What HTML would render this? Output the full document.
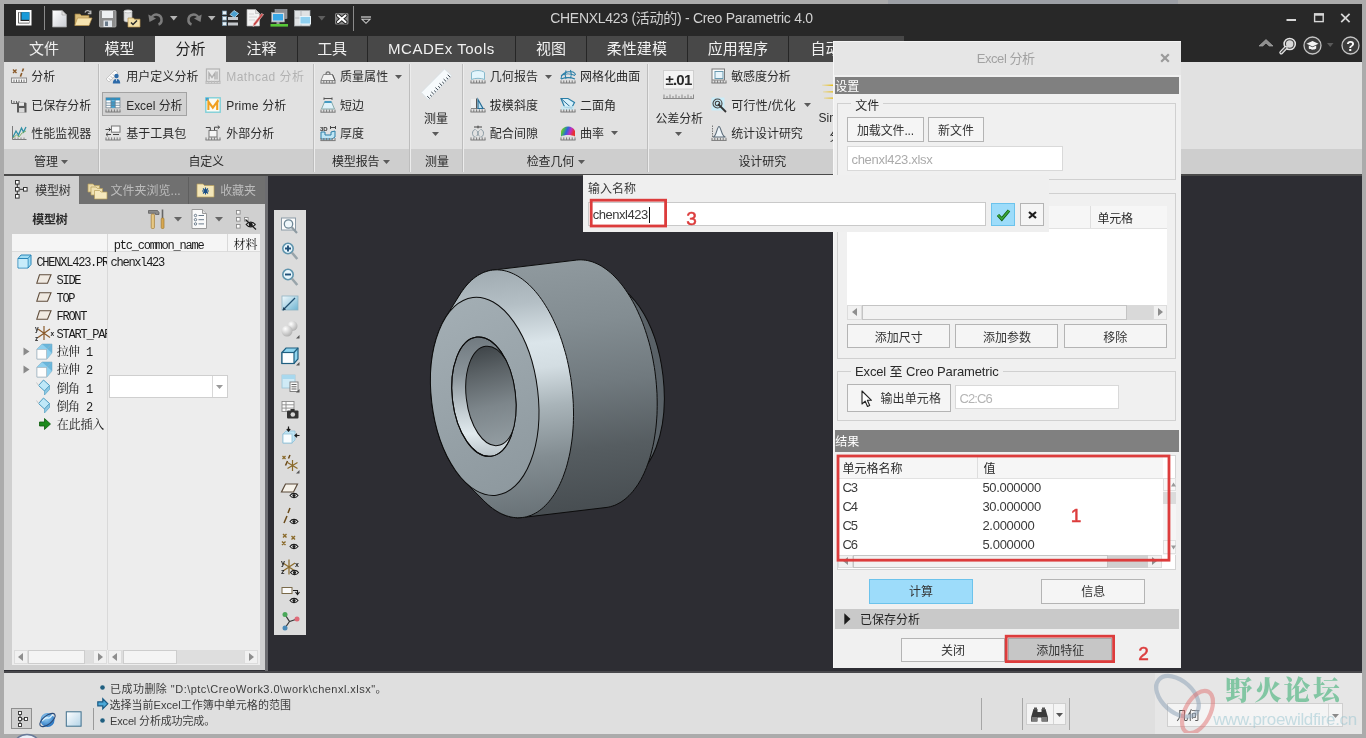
<!DOCTYPE html>
<html lang="zh-CN"><head><meta charset="utf-8"><title>Creo Parametric - Excel 分析</title>
<style>
html,body{margin:0;padding:0}
body{width:1366px;height:738px;overflow:hidden;background:#ababab;position:relative;font-family:'Liberation Sans','Noto Sans CJK SC',sans-serif;font-size:12px}
.a{position:absolute;box-sizing:content-box}
.t{position:absolute;white-space:pre;margin:0;padding:0}
svg{overflow:visible}
svg text{font-family:'Liberation Sans','Noto Sans CJK SC',sans-serif}
</style></head><body>
<div id="app" style="position:absolute;left:0;top:0;width:1366px;height:738px;overflow:hidden;will-change:transform">
<div class="a" style="left:888px;top:0px;width:290px;height:4px;background:#9da0a6;"></div>
<div class="a" style="left:4px;top:4px;width:1358px;height:729px;background:#2d2d33;"></div>
<div class="a" style="left:4px;top:4px;width:1358px;height:58px;background:#282828;"></div>
<span class="t" id="title" style="left:550.20px;top:8.00px;font-size:14px;line-height:20px;color:#d2d2d2;letter-spacing:-0.283px;">CHENXL423 (活动的) - Creo Parametric 4.0</span>
<svg class="a" style="left:1280px;top:8px;" width="80" height="20" viewBox="0 0 80 20"><rect x="6.5" y="11" width="9.5" height="2" fill="#d6d6d6"/>
<rect x="34.6" y="6" width="8.6" height="7.6" fill="none" stroke="#d6d6d6" stroke-width="1.4"/><rect x="34" y="5.3" width="10" height="2.4" fill="#d6d6d6"/>
<path d="M61.2 5.8 L69.6 14.2 M69.6 5.8 L61.2 14.2" stroke="#d6d6d6" stroke-width="1.7"/></svg>
<div class="a" style="left:84px;top:36px;width:820px;height:26px;background:#484848;"></div>
<div class="a" style="left:4px;top:36px;width:80px;height:26px;background:#606060;"></div>
<span class="t" id="tab0" style="left:29.10px;top:37.50px;font-size:15px;line-height:21px;color:#f0f0f0;letter-spacing:-0.100px;">文件</span>
<div class="a" style="left:83.5px;top:36px;width:1px;height:26px;background:#262626;"></div>
<span class="t" id="tab1" style="left:104.60px;top:37.50px;font-size:15px;line-height:21px;color:#f0f0f0;letter-spacing:-0.100px;">模型</span>
<div class="a" style="left:155px;top:36px;width:71px;height:26px;background:#e1e1e1;"></div>
<span class="t" id="tab2" style="left:175.60px;top:37.50px;font-size:15px;line-height:21px;color:#1e1e1e;letter-spacing:-0.100px;">分析</span>
<span class="t" id="tab3" style="left:246.60px;top:37.50px;font-size:15px;line-height:21px;color:#f0f0f0;letter-spacing:-0.100px;">注释</span>
<div class="a" style="left:296.5px;top:36px;width:1px;height:26px;background:#262626;"></div>
<span class="t" id="tab4" style="left:317.20px;top:37.50px;font-size:15px;line-height:21px;color:#f0f0f0;letter-spacing:-0.100px;">工具</span>
<div class="a" style="left:366.7px;top:36px;width:1px;height:26px;background:#262626;"></div>
<span class="t" id="tab5" style="left:388.05px;top:37.50px;font-size:15px;line-height:21px;color:#f0f0f0;letter-spacing:0.509px;">MCADEx Tools</span>
<div class="a" style="left:515.1px;top:36px;width:1px;height:26px;background:#262626;"></div>
<span class="t" id="tab6" style="left:536.05px;top:37.50px;font-size:15px;line-height:21px;color:#f0f0f0;letter-spacing:-0.100px;">视图</span>
<div class="a" style="left:585.8px;top:36px;width:1px;height:26px;background:#262626;"></div>
<span class="t" id="tab7" style="left:606.75px;top:37.50px;font-size:15px;line-height:21px;color:#f0f0f0;letter-spacing:0.046px;">柔性建模</span>
<div class="a" style="left:686.9px;top:36px;width:1px;height:26px;background:#262626;"></div>
<span class="t" id="tab8" style="left:707.80px;top:37.50px;font-size:15px;line-height:21px;color:#f0f0f0;letter-spacing:0.046px;">应用程序</span>
<div class="a" style="left:787.9px;top:36px;width:1px;height:26px;background:#262626;"></div>
<span class="t" id="tab9" style="left:810.40px;top:37.50px;font-size:15px;line-height:21px;color:#f0f0f0;letter-spacing:-0.005px;">自动化</span>
<div class="a" style="left:4px;top:62px;width:1358px;height:87.5px;background:#e1e1e1;"></div>
<div class="a" style="left:4px;top:149.3px;width:1358px;height:24.7px;background:#cecece;"></div>
<div class="a" style="left:4px;top:174px;width:1358px;height:1.6px;background:#4a4a4a;"></div>
<div class="a" style="left:98.0px;top:64px;width:1px;height:108px;background:#bdbdbd;"></div>
<div class="a" style="left:99.0px;top:64px;width:1px;height:108px;background:#ececec;"></div>
<div class="a" style="left:312.5px;top:64px;width:1px;height:108px;background:#bdbdbd;"></div>
<div class="a" style="left:313.5px;top:64px;width:1px;height:108px;background:#ececec;"></div>
<div class="a" style="left:409.1px;top:64px;width:1px;height:108px;background:#bdbdbd;"></div>
<div class="a" style="left:410.1px;top:64px;width:1px;height:108px;background:#ececec;"></div>
<div class="a" style="left:462.1px;top:64px;width:1px;height:108px;background:#bdbdbd;"></div>
<div class="a" style="left:463.1px;top:64px;width:1px;height:108px;background:#ececec;"></div>
<div class="a" style="left:647.0px;top:64px;width:1px;height:108px;background:#bdbdbd;"></div>
<div class="a" style="left:648.0px;top:64px;width:1px;height:108px;background:#ececec;"></div>
<svg class="a" style="left:11.3px;top:68.4px;" width="16" height="16" viewBox="0 0 16 16"><path d="M2 1.5l3.5 3.5M5.5 1.5L2 5" stroke="#8a5a2a" stroke-width="1.4"/><path d="M12.5 0.5l-1.2 3M10.8 5l-1.4 3.6" stroke="#8a5a2a" stroke-width="1.6"/><rect x="0.5" y="10" width="15" height="4.5" fill="#f4f4f4" stroke="#8a8a8a"/><path d="M3 14v-2.4M5.5 14v-2.4M8 14v-2.4M10.5 14v-2.4M13 14v-2.4" stroke="#777"/></svg>
<span class="t" id="t12" style="left:31.30px;top:68.40px;font-size:12px;line-height:18px;color:#2b2b2b;letter-spacing:-0.008px;">分析</span>
<svg class="a" style="left:11.3px;top:96.5px;" width="16" height="16" viewBox="0 0 16 16"><path d="M0.5 3v3.5H9 M3 6.5v-2.5M5.5 6.5v-2.5M8 6.5v-2.5" stroke="#666" fill="none"/><path d="M6 5.5h8.5l1 1v9H6z" fill="#5a5a5a"/><rect x="8" y="5.5" width="5" height="3.4" fill="#e8e8e8"/><rect x="8" y="11" width="5.5" height="4.5" fill="#d8d8d8"/></svg>
<span class="t" id="t13" style="left:31.30px;top:96.50px;font-size:12px;line-height:18px;color:#2b2b2b;letter-spacing:-0.003px;">已保存分析</span>
<svg class="a" style="left:11.3px;top:124.6px;" width="16" height="16" viewBox="0 0 16 16"><path d="M1.5 1v13.5H15.5" stroke="#7a7a7a" fill="none"/><path d="M2 12l3-6 2.5 4 3-7 2 4 2.5-5" stroke="#2f8fa5" stroke-width="1.3" fill="none"/><path d="M2 13l3.5-3 2.5 2 3-4 4-2" stroke="#6aa84f" stroke-width="1" fill="none" opacity=".8"/><path d="M4 14.5v-2M7 14.5v-2M10 14.5v-2M13 14.5v-2" stroke="#888"/></svg>
<span class="t" id="t14" style="left:31.30px;top:124.60px;font-size:12px;line-height:18px;color:#2b2b2b;letter-spacing:-0.003px;">性能监视器</span>
<span class="t" id="t15" style="left:34.00px;top:153.00px;font-size:12px;line-height:18px;color:#2b2b2b;letter-spacing:-0.008px;">管理</span>
<svg class="a" style="left:60.8px;top:159.5px;" width="7" height="4" viewBox="0 0 7 4"><path d="M0 0h7l-3.5 4z" fill="#5a5a5a"/></svg>
<div class="a" style="left:102.4px;top:92.4px;width:82.4px;height:21.8px;background:#d2d2d2;border:1px solid #a3a3a3;"></div>
<svg class="a" style="left:105.3px;top:68.4px;" width="16" height="16" viewBox="0 0 16 16"><path d="M1 11L10 2l3 3-9 9z" fill="#fafafa" stroke="#bdbdbd" stroke-width=".8"/><path d="M4 10.5l1.2 1.2M6 8.5l1.2 1.2M8 6.5l1.2 1.2" stroke="#999"/><circle cx="11.5" cy="8" r="2.2" fill="#2c6aa8"/><path d="M7.8 15.5c0-3.4 1.6-4.6 3.7-4.6s3.7 1.2 3.7 4.6z" fill="#2c6aa8"/><path d="M10.8 11.2l.7 2.2.7-2.2z" fill="#fff"/></svg>
<span class="t" id="t16" style="left:126.20px;top:68.40px;font-size:12px;line-height:18px;color:#2b2b2b;letter-spacing:0.048px;">用户定义分析</span>
<svg class="a" style="left:105.3px;top:96.5px;" width="16" height="16" viewBox="0 0 16 16"><rect x="1" y="0.8" width="14" height="10" fill="#fff" stroke="#7a8a96" stroke-width=".8"/><rect x="1" y="0.8" width="14" height="2.6" fill="#2f8fc0"/><rect x="6" y="3.4" width="4.2" height="7.4" fill="#3c9fd0"/><path d="M1 5.9h14M1 8.3h14M6 1v10M10.2 1v10" stroke="#5f7f94" stroke-width=".8"/><path d="M0.5 15H15.5 M1.0 15v-2.6 M3.8 15v-2.6 M6.6 15v-2.6 M9.4 15v-2.6 M12.2 15v-2.6 M15.0 15v-2.6" stroke="#7a7a7a" stroke-width="1" fill="none"/></svg>
<span class="t" id="t17" style="left:126.20px;top:96.50px;font-size:12px;line-height:18px;color:#2b2b2b;letter-spacing:-0.036px;">Excel 分析</span>
<svg class="a" style="left:105.3px;top:124.6px;" width="16" height="16" viewBox="0 0 16 16"><rect x="6.5" y="1" width="8.5" height="6.2" fill="#f6f6f6" stroke="#777"/><path d="M0.5 4.5h5M3.8 2.8l1.8 1.7-1.8 1.7M6 9.5H1M2.8 7.8L1 9.5l1.8 1.7" stroke="#444" fill="none"/><path d="M8 9.5h6" stroke="#444"/><path d="M0.5 15H15.5 M1.0 15v-2.6 M3.8 15v-2.6 M6.6 15v-2.6 M9.4 15v-2.6 M12.2 15v-2.6 M15.0 15v-2.6" stroke="#7a7a7a" stroke-width="1" fill="none"/></svg>
<span class="t" id="t18" style="left:126.20px;top:124.60px;font-size:12px;line-height:18px;color:#2b2b2b;letter-spacing:-0.003px;">基于工具包</span>
<svg class="a" style="left:205.4px;top:68.4px;" width="16" height="16" viewBox="0 0 16 16"><rect x="1.5" y="1" width="13" height="12.5" fill="#e9e9e9" stroke="#b5b5b5" stroke-width="1.3"/><path d="M4 11.5V5l3 4.5L10 5v6.5M12 11.5v-8" stroke="#b0b0b0" stroke-width="1.4" fill="none"/><path d="M0.5 15.4H15.5 M1.0 15.4v-2.6 M3.8 15.4v-2.6 M6.6 15.4v-2.6 M9.4 15.4v-2.6 M12.2 15.4v-2.6 M15.0 15.4v-2.6" stroke="#bcbcbc" stroke-width="1" fill="none"/></svg>
<span class="t" id="t19" style="left:226.20px;top:68.40px;font-size:12px;line-height:18px;color:#b2b2b2;letter-spacing:0.503px;">Mathcad 分析</span>
<svg class="a" style="left:205.4px;top:96.5px;" width="16" height="16" viewBox="0 0 16 16"><rect x="0.8" y="0.8" width="14.4" height="14.4" fill="#fbfbf4" stroke="#7fcfd8" stroke-width="1.4"/><rect x="0.8" y="0.8" width="3" height="3" fill="#3aa0d8"/><path d="M3.4 13V4.6l4.4 6 4.4-6V13" stroke="#f0a020" stroke-width="2.1" fill="none" stroke-linejoin="miter"/><path d="M13.2 3.2v2" stroke="#f0a020" stroke-width="1.2"/></svg>
<span class="t" id="t20" style="left:226.20px;top:96.50px;font-size:12px;line-height:18px;color:#2b2b2b;letter-spacing:0.216px;">Prime 分析</span>
<svg class="a" style="left:205.4px;top:124.6px;" width="16" height="16" viewBox="0 0 16 16"><rect x="4" y="5.5" width="8" height="6.5" fill="#f6f6f6" stroke="#777"/><path d="M0.8 2.5h4.5v3M9.5 5V2.2h5M12.8 0.6l1.8 1.6-1.8 1.6" stroke="#444" fill="none"/><path d="M0.5 15H15.5 M1.0 15v-2.6 M3.8 15v-2.6 M6.6 15v-2.6 M9.4 15v-2.6 M12.2 15v-2.6 M15.0 15v-2.6" stroke="#7a7a7a" stroke-width="1" fill="none"/></svg>
<span class="t" id="t21" style="left:226.20px;top:124.60px;font-size:12px;line-height:18px;color:#2b2b2b;letter-spacing:-0.004px;">外部分析</span>
<span class="t" id="t22" style="left:188.45px;top:153.00px;font-size:12px;line-height:18px;color:#2b2b2b;letter-spacing:-0.167px;">自定义</span>
<svg class="a" style="left:320px;top:68.4px;" width="16" height="16" viewBox="0 0 16 16"><path d="M3.5 6.5h9l2.5 6h-14z" fill="#f2f2f2" stroke="#8a8a8a"/><path d="M6 6.2c0-3 4-3 4 0" stroke="#777" fill="none" stroke-width="1.3"/><path d="M12.5 6.5l2.5 6" stroke="#555"/><path d="M0.5 15.2H15.5 M1.0 15.2v-2.6 M3.8 15.2v-2.6 M6.6 15.2v-2.6 M9.4 15.2v-2.6 M12.2 15.2v-2.6 M15.0 15.2v-2.6" stroke="#7a7a7a" stroke-width="1" fill="none"/></svg>
<span class="t" id="t23" style="left:340.00px;top:68.40px;font-size:12px;line-height:18px;color:#2b2b2b;letter-spacing:0.048px;">质量属性</span>
<svg class="a" style="left:320px;top:96.5px;" width="16" height="16" viewBox="0 0 16 16"><path d="M4 1.5h8M4 0.5v2.4M12 0.5v2.4" stroke="#555" fill="none"/><path d="M4.5 5h7l3 7h-13z" fill="#dff2fa" stroke="#8aa"/><path d="M4.5 5h7" stroke="#2a8fc0" stroke-width="1.6"/><path d="M0.5 15.2H15.5 M1.0 15.2v-2.6 M3.8 15.2v-2.6 M6.6 15.2v-2.6 M9.4 15.2v-2.6 M12.2 15.2v-2.6 M15.0 15.2v-2.6" stroke="#7a7a7a" stroke-width="1" fill="none"/></svg>
<span class="t" id="t24" style="left:340.00px;top:96.50px;font-size:12px;line-height:18px;color:#2b2b2b;letter-spacing:-0.008px;">短边</span>
<svg class="a" style="left:320px;top:124.6px;" width="16" height="16" viewBox="0 0 16 16"><text x="0" y="5.5" font-size="6" font-weight="bold" fill="#333">3D</text><path d="M10.5 2.5h5M10.5 1v3M15.5 1v3" stroke="#444" fill="none"/><path d="M1 7h4v3h6V7l4-1v6l-3 2H1z" fill="#bfe6f5" stroke="#2a7fa8"/><path d="M0.5 15.6H15.5 M1.0 15.6v-2.6 M3.8 15.6v-2.6 M6.6 15.6v-2.6 M9.4 15.6v-2.6 M12.2 15.6v-2.6 M15.0 15.6v-2.6" stroke="#7a7a7a" stroke-width="1" fill="none"/></svg>
<span class="t" id="t25" style="left:340.00px;top:124.60px;font-size:12px;line-height:18px;color:#2b2b2b;letter-spacing:-0.008px;">厚度</span>
<svg class="a" style="left:394.7px;top:74.5px;" width="7" height="4" viewBox="0 0 7 4"><path d="M0 0h7l-3.5 4z" fill="#5a5a5a"/></svg>
<span class="t" id="t26" style="left:332.00px;top:153.00px;font-size:12px;line-height:18px;color:#2b2b2b;letter-spacing:-0.129px;">模型报告</span>
<svg class="a" style="left:382.8px;top:159.5px;" width="7" height="4" viewBox="0 0 7 4"><path d="M0 0h7l-3.5 4z" fill="#5a5a5a"/></svg>
<svg class="a" style="left:0;top:0" width="1366" height="738" viewBox="0 0 1366 738"><path d="M444.5 69L451.6 75.6L428.3 100L421.2 92.4Z" fill="#f6fafc" stroke="#d4dde2" stroke-width=".8"/><path d="M450.2 77.1l-2.5 -2.3M448.1 79.2l-1.8 -1.6M446.1 81.4l-2.5 -2.3M444.0 83.5l-1.8 -1.6M442.0 85.7l-2.5 -2.3M440.0 87.8l-1.8 -1.6M437.9 89.9l-2.5 -2.3M435.9 92.1l-1.8 -1.6M433.8 94.2l-2.5 -2.3M431.8 96.4l-1.8 -1.6M429.7 98.5l-2.5 -2.3" stroke="#3c4650" stroke-width="1" fill="none"/></svg>
<span class="t" id="t27" style="left:423.90px;top:109.60px;font-size:12px;line-height:18px;color:#2b2b2b;letter-spacing:-0.008px;">测量</span>
<svg class="a" style="left:432.1px;top:132.1px;" width="7" height="4" viewBox="0 0 7 4"><path d="M0 0h7l-3.5 4z" fill="#5a5a5a"/></svg>
<span class="t" id="t28" style="left:425.00px;top:153.00px;font-size:12px;line-height:18px;color:#2b2b2b;letter-spacing:-0.008px;">测量</span>
<svg class="a" style="left:469.5px;top:68.4px;" width="16" height="16" viewBox="0 0 16 16"><path d="M1.5 11.5V4.5c3-2.6 10-2.6 13 0v7c-3-1.6-10-1.6-13 0z" fill="#e3f5fc" stroke="#86b9cc"/><path d="M0.5 15H15.5 M1.0 15v-2.6 M3.8 15v-2.6 M6.6 15v-2.6 M9.4 15v-2.6 M12.2 15v-2.6 M15.0 15v-2.6" stroke="#7a7a7a" stroke-width="1" fill="none"/></svg>
<span class="t" id="t29" style="left:489.70px;top:68.40px;font-size:12px;line-height:18px;color:#2b2b2b;letter-spacing:0.096px;">几何报告</span>
<svg class="a" style="left:469.5px;top:96.5px;" width="16" height="16" viewBox="0 0 16 16"><path d="M1 11.5h14" stroke="#888"/><path d="M6.5 1.5v10" stroke="#555"/><path d="M8 2.5l5 9h-5z" fill="#bfe1f0" stroke="#2a6f98" stroke-width="1.2"/><rect x="1" y="2" width="5" height="9" fill="#f4f4f4" opacity=".7"/><path d="M0.5 15H15.5 M1.0 15v-2.6 M3.8 15v-2.6 M6.6 15v-2.6 M9.4 15v-2.6 M12.2 15v-2.6 M15.0 15v-2.6" stroke="#7a7a7a" stroke-width="1" fill="none"/></svg>
<span class="t" id="t30" style="left:489.70px;top:96.50px;font-size:12px;line-height:18px;color:#2b2b2b;letter-spacing:0.096px;">拔模斜度</span>
<svg class="a" style="left:469.5px;top:124.6px;" width="16" height="16" viewBox="0 0 16 16"><path d="M4 2h8M8 0.6v2.8" stroke="#444" fill="none"/><path d="M5.5 4.5c-4 0-4 7.5 0 7.5M10.5 4.5c4 0 4 7.5 0 7.5M6.5 5.5c2 1.2 2 4.6 0 5.6M9.5 5.5c-2 1.2-2 4.6 0 5.6" stroke="#8a9aa2" fill="none"/><path d="M0.5 15H15.5 M1.0 15v-2.6 M3.8 15v-2.6 M6.6 15v-2.6 M9.4 15v-2.6 M12.2 15v-2.6 M15.0 15v-2.6" stroke="#7a7a7a" stroke-width="1" fill="none"/></svg>
<span class="t" id="t31" style="left:489.70px;top:124.60px;font-size:12px;line-height:18px;color:#2b2b2b;letter-spacing:0.096px;">配合间隙</span>
<svg class="a" style="left:544.5px;top:74.5px;" width="7" height="4" viewBox="0 0 7 4"><path d="M0 0h7l-3.5 4z" fill="#5a5a5a"/></svg>
<svg class="a" style="left:560px;top:68.4px;" width="16" height="16" viewBox="0 0 16 16"><path d="M1 11c0-8 14-10 14.500-4M1 7.5c4-2 10-2 14 0M1 11c4-1.600 10-1.600 14 0M6 2.5c-1 3-1 6 0 8.500M10.5 2c1 3 1 6 0 8.500" stroke="#2a7fa8" fill="none" stroke-width="1.100"/><path d="M0.5 15H15.5 M1.0 15v-2.6 M3.8 15v-2.6 M6.6 15v-2.6 M9.4 15v-2.6 M12.2 15v-2.6 M15.0 15v-2.6" stroke="#7a7a7a" stroke-width="1" fill="none"/></svg>
<span class="t" id="t32" style="left:580.00px;top:68.40px;font-size:12px;line-height:18px;color:#2b2b2b;letter-spacing:0.039px;">网格化曲面</span>
<svg class="a" style="left:560px;top:96.5px;" width="16" height="16" viewBox="0 0 16 16"><path d="M1 1.500h7l6.500 4-3 5.500-7-1z" fill="#d8f0fa" stroke="#2a7fa8" stroke-width="1.200"/><path d="M1 1.500l10.500 9.500" stroke="#2a6f98"/><rect x="1" y="9" width="13" height="4" fill="#c8e8f4" opacity=".8"/><path d="M0.5 15H15.5 M1.0 15v-2.6 M3.8 15v-2.6 M6.6 15v-2.6 M9.4 15v-2.6 M12.2 15v-2.6 M15.0 15v-2.6" stroke="#7a7a7a" stroke-width="1" fill="none"/></svg>
<span class="t" id="t33" style="left:580.00px;top:96.50px;font-size:12px;line-height:18px;color:#2b2b2b;letter-spacing:-0.005px;">二面角</span>
<svg class="a" style="left:560px;top:124.6px;" width="16" height="16" viewBox="0 0 16 16"><defs><linearGradient id="gcv" x1="0" x2="1" y1="0" y2="0.3"><stop offset="0" stop-color="#e8c020"/><stop offset=".25" stop-color="#48c048"/><stop offset=".5" stop-color="#3060e0"/><stop offset=".75" stop-color="#c030c0"/><stop offset="1" stop-color="#e83030"/></linearGradient></defs><path d="M1 11.500V6c2-6 12-6 14 0v5.500c-3-2-11-2-14 0z" fill="url(#gcv)"/><path d="M0.5 15H15.5 M1.0 15v-2.6 M3.8 15v-2.6 M6.6 15v-2.6 M9.4 15v-2.6 M12.2 15v-2.6 M15.0 15v-2.6" stroke="#7a7a7a" stroke-width="1" fill="none"/></svg>
<span class="t" id="t34" style="left:580.00px;top:124.60px;font-size:12px;line-height:18px;color:#2b2b2b;letter-spacing:-0.008px;">曲率</span>
<svg class="a" style="left:611.1px;top:130.5px;" width="7" height="4" viewBox="0 0 7 4"><path d="M0 0h7l-3.5 4z" fill="#5a5a5a"/></svg>
<span class="t" id="t35" style="left:526.70px;top:153.00px;font-size:12px;line-height:18px;color:#2b2b2b;letter-spacing:-0.129px;">检查几何</span>
<svg class="a" style="left:577.5px;top:159.5px;" width="7" height="4" viewBox="0 0 7 4"><path d="M0 0h7l-3.5 4z" fill="#5a5a5a"/></svg>
<svg class="a" style="left:662px;top:69px;" width="34" height="32" viewBox="0 0 34 32"><rect x="1.500" y="1.500" width="30" height="18.500" fill="#f4f4f4" stroke="#cfcfcf"/>
<text x="16.500" y="16" text-anchor="middle" font-size="15" font-weight="bold" fill="#2a2a2a" letter-spacing="-0.800">±.01</text>
<path d="M1 29.500h31M2 29.500v-4M5 29.500v-2.500M8 29.500v-4M11 29.500v-2.500M14 29.500v-4M17 29.500v-2.500M20 29.500v-4M23 29.500v-2.500M26 29.500v-4M29 29.500v-2.500M31.500 29.500v-4" stroke="#8a8a8a" fill="none"/></svg>
<span class="t" id="t36" style="left:655.50px;top:109.70px;font-size:12px;line-height:18px;color:#2b2b2b;letter-spacing:-0.154px;">公差分析</span>
<svg class="a" style="left:675.2px;top:131.7px;" width="7" height="4" viewBox="0 0 7 4"><path d="M0 0h7l-3.5 4z" fill="#5a5a5a"/></svg>
<svg class="a" style="left:710.6px;top:68.4px;" width="16" height="16" viewBox="0 0 16 16"><rect x="1" y="1" width="12.500" height="11" fill="#fafafa" stroke="#7a7a7a"/><rect x="4" y="3.500" width="8" height="7" fill="#e8f4fa" stroke="#6a9ab0"/><path d="M0.5 15H15.5 M1.0 15v-2.6 M3.8 15v-2.6 M6.6 15v-2.6 M9.4 15v-2.6 M12.2 15v-2.6 M15.0 15v-2.6" stroke="#7a7a7a" stroke-width="1" fill="none"/></svg>
<span class="t" id="t37" style="left:731.20px;top:68.40px;font-size:12px;line-height:18px;color:#2b2b2b;letter-spacing:-0.082px;">敏感度分析</span>
<svg class="a" style="left:710.6px;top:97.0px;" width="16" height="16" viewBox="0 0 16 16"><rect x="0.500" y="0.500" width="13" height="13" fill="#c9ecf8"/><circle cx="6.500" cy="6.500" r="4.500" fill="none" stroke="#444" stroke-width="1.100"/><circle cx="6.500" cy="6.500" r="2.200" fill="none" stroke="#444" stroke-width="1.100"/><path d="M7 7l8 8" stroke="#333" stroke-width="1.800"/></svg>
<span class="t" id="t38" style="left:731.20px;top:97.30px;font-size:12px;line-height:18px;color:#2b2b2b;letter-spacing:0.244px;">可行性/优化</span>
<svg class="a" style="left:710.6px;top:124.6px;" width="16" height="16" viewBox="0 0 16 16"><path d="M1.500 0.500v12.500" stroke="#777" stroke-dasharray="1.500 1"/><path d="M2 12c3.500 0 4-10.500 6-10.500s2.500 10.500 6.500 10.500z" fill="#eef4f8" stroke="#5a6a78" stroke-width="1.100"/><path d="M0.5 15.4H15.5 M1.0 15.4v-2.6 M3.8 15.4v-2.6 M6.6 15.4v-2.6 M9.4 15.4v-2.6 M12.2 15.4v-2.6 M15.0 15.4v-2.6" stroke="#7a7a7a" stroke-width="1" fill="none"/></svg>
<span class="t" id="t39" style="left:731.20px;top:124.60px;font-size:12px;line-height:18px;color:#2b2b2b;letter-spacing:-0.068px;">统计设计研究</span>
<svg class="a" style="left:803.7px;top:102.8px;" width="7" height="4" viewBox="0 0 7 4"><path d="M0 0h7l-3.5 4z" fill="#5a5a5a"/></svg>
<span class="t" id="t40" style="left:738.40px;top:153.30px;font-size:12px;line-height:18px;color:#2b2b2b;letter-spacing:-0.052px;">设计研究</span>
<span class="t" id="t41" style="left:818.60px;top:108.70px;font-size:12px;line-height:18px;color:#2b2b2b;">Simulate</span>
<span class="t" id="t42" style="left:829.50px;top:127.50px;font-size:12px;line-height:18px;color:#2b2b2b;">分析</span>
<svg class="a" style="left:822px;top:82px;" width="12" height="18" viewBox="0 0 12 18"><defs><linearGradient id="gsim" x1="0" x2="1" y1="0" y2="0"><stop offset="0" stop-color="#ecc21c" stop-opacity=".15"/><stop offset="1" stop-color="#e6b800"/></linearGradient></defs><path d="M0 2.600h12v1.300H0zM1 9.300h11v1.300H1zM2 15.400h10v1.300H2z" fill="url(#gsim)"/></svg>
<div class="a" style="left:4px;top:175.6px;width:261.4px;height:494.6px;background:#d0d0d0;"></div>
<div class="a" style="left:79px;top:175.6px;width:186.3px;height:28.8px;background:#707070;"></div>
<div class="a" style="left:187.6px;top:177px;width:1px;height:27px;background:#5f5f5f;"></div>
<div class="a" style="left:265.3px;top:175.6px;width:2.8px;height:495.2px;background:#6c6c70;"></div>
<svg class="a" style="left:15px;top:180px;" width="14" height="19" viewBox="0 0 14 19"><g fill="#fff" stroke="#333" stroke-width="1"><rect x="0.500" y="0.500" width="3.600" height="3.600"/><rect x="0.500" y="7.500" width="3.600" height="3.600"/><rect x="0.500" y="14.500" width="3.600" height="3.600"/><rect x="8.500" y="7.500" width="3.600" height="3.600"/></g><path d="M2.300 4v3.500M2.300 11v3.500M4.500 9.300h4" stroke="#333" fill="none"/></svg>
<span class="t" id="t43" style="left:35.20px;top:181.80px;font-size:12px;line-height:18px;color:#333;letter-spacing:-0.203px;">模型树</span>
<svg class="a" style="left:87px;top:181px;" width="22" height="19" viewBox="0 0 22 19"><path d="M1 3h5l1.500 1.500h5V11H1z" fill="#e9d9a8" stroke="#b89f5a" stroke-width=".7"/><path d="M4 6h5l1.500 1.500h5V14H4z" fill="#efe0b0" stroke="#b89f5a" stroke-width=".7"/><path d="M7.500 9.500h5l1.500 1.500h6V18H7.500z" fill="#f5e8bd" stroke="#b89f5a" stroke-width=".7"/></svg>
<span class="t" id="t44" style="left:110.60px;top:181.80px;font-size:12px;line-height:18px;color:#bcbcbc;letter-spacing:-0.002px;">文件夹浏览...</span>
<svg class="a" style="left:196px;top:182px;" width="20" height="16" viewBox="0 0 20 16"><path d="M1 2h6l1.500 1.500H18V15H1z" fill="#f3e6b8" stroke="#b89f5a" stroke-width=".7"/><path d="M9.500 5.500v7M6 9h7M7 6.500l5 5M12 6.500l-5 5" stroke="#1a4f88" stroke-width="1.100"/></svg>
<span class="t" id="t45" style="left:220.20px;top:181.80px;font-size:12px;line-height:18px;color:#bcbcbc;letter-spacing:-0.136px;">收藏夹</span>
<span class="t" id="t46" style="left:32.20px;top:210.60px;font-size:12px;line-height:18px;color:#2a2a2a;font-weight:bold;letter-spacing:-0.203px;">模型树</span>
<svg class="a" style="left:147px;top:208px;" width="20" height="22" viewBox="0 0 20 22"><path d="M1.500 2.500h9l1.500 2v2h-3.500v-1.200H1.500z" fill="#8a8a8a" stroke="#555" stroke-width=".7"/><rect x="4.200" y="6" width="3.200" height="14.500" rx="1" fill="#e7c884" stroke="#a07830" stroke-width=".7"/><path d="M15.500 1.500v9" stroke="#666" stroke-width="1.600"/><rect x="14.200" y="10" width="2.800" height="10.500" rx="1" fill="#d8a850" stroke="#a07830" stroke-width=".7"/></svg>
<svg class="a" style="left:173.5px;top:216.55px;" width="8" height="4.5" viewBox="0 0 8 4.5"><path d="M0 0h8l-4.0 4.5z" fill="#666"/></svg>
<svg class="a" style="left:191px;top:209px;" width="17" height="20" viewBox="0 0 17 20"><path d="M1 0.500h10.500l4 4V19.500H1z" fill="#fafafa" stroke="#9a9a9a"/><path d="M11.500 0.500v4h4" fill="#e0e0e0" stroke="#9a9a9a"/><g stroke="#6a7a8a" fill="none"><circle cx="4.500" cy="6.500" r="1.200"/><circle cx="4.500" cy="10.700" r="1.200"/><circle cx="4.500" cy="14.900" r="1.200"/><path d="M7.500 6.500h5.500M7.500 10.700h5.500M7.500 14.900h5.500"/></g></svg>
<svg class="a" style="left:215.3px;top:216.55px;" width="8" height="4.5" viewBox="0 0 8 4.5"><path d="M0 0h8l-4.0 4.5z" fill="#666"/></svg>
<svg class="a" style="left:235px;top:209.5px;" width="22" height="22" viewBox="0 0 22 22"><g fill="#fff" stroke="#8a8a8a" stroke-width=".9"><rect x="1.500" y="0.500" width="3.600" height="3.600"/><rect x="1.500" y="7.500" width="3.600" height="3.600"/><rect x="1.500" y="14.500" width="3.600" height="3.600"/><rect x="9.500" y="7.500" width="3.600" height="3.600"/></g><path d="M11.200 14.500c2.200-3.200 6.800-3.200 9 0c-2.200 3.200-6.800 3.200-9 0z" fill="#f4f4f4" stroke="#1c1c1c" stroke-width="1.300"/><circle cx="15.700" cy="14.500" r="2" fill="#1c1c1c"/><path d="M10.500 9.500l10.500 10" stroke="#1c1c1c" stroke-width="1.200"/></svg>
<div class="a" style="left:12.3px;top:233.5px;width:248px;height:431px;background:#ededed;"></div>
<div class="a" style="left:12.3px;top:233.5px;width:248px;height:18px;background:#f5f5f5;"></div>
<div class="a" style="left:12.3px;top:251.2px;width:248px;height:1px;background:#dcdcdc;"></div>
<div class="a" style="left:107.2px;top:233.5px;width:1px;height:416.5px;background:#d9d9d9;"></div>
<div class="a" style="left:227px;top:233.5px;width:1px;height:18px;background:#d9d9d9;"></div>
<span class="t" id="t47" style="left:113.80px;top:237.20px;font-size:12px;line-height:18px;color:#1a1a1a;font-family:'Liberation Mono','Noto Serif CJK SC',monospace;letter-spacing:-1.229px;">ptc_common_name</span>
<span class="t" id="t48" style="left:233.60px;top:236.70px;font-size:12px;line-height:18px;color:#1a1a1a;font-family:'Liberation Mono','Noto Serif CJK SC',monospace;letter-spacing:-0.207px;">材料</span>
<div class="a" style="left:0;top:0;width:107px;height:738px;overflow:hidden"><span class="t" id="t49" style="left:36.40px;top:253.80px;font-size:12px;line-height:18px;color:#1a1a1a;font-family:'Liberation Mono','Noto Serif CJK SC',monospace;letter-spacing:-1.233px;">CHENXL423.PRT</span></div>
<span class="t" id="t50" style="left:110.60px;top:253.80px;font-size:12px;line-height:18px;color:#1a1a1a;font-family:'Liberation Mono','Noto Serif CJK SC',monospace;letter-spacing:-1.269px;">chenxl423</span>
<span class="t" id="t51" style="left:56.60px;top:271.80px;font-size:12px;line-height:18px;color:#1a1a1a;font-family:'Liberation Mono','Noto Serif CJK SC',monospace;letter-spacing:-1.303px;">SIDE</span>
<span class="t" id="t52" style="left:56.60px;top:289.80px;font-size:12px;line-height:18px;color:#1a1a1a;font-family:'Liberation Mono','Noto Serif CJK SC',monospace;letter-spacing:-1.337px;">TOP</span>
<span class="t" id="t53" style="left:56.60px;top:307.60px;font-size:12px;line-height:18px;color:#1a1a1a;font-family:'Liberation Mono','Noto Serif CJK SC',monospace;letter-spacing:-1.283px;">FRONT</span>
<div class="a" style="left:0;top:0;width:107px;height:738px;overflow:hidden"><span class="t" id="t54" style="left:56.60px;top:325.60px;font-size:12px;line-height:18px;color:#1a1a1a;font-family:'Liberation Mono','Noto Serif CJK SC',monospace;letter-spacing:-1.242px;">START_PART</span></div>
<span class="t" id="t55" style="left:56.80px;top:344.30px;font-size:12px;line-height:18px;color:#1a1a1a;font-family:'Liberation Mono','Noto Serif CJK SC',monospace;letter-spacing:-0.702px;">拉伸 1</span>
<span class="t" id="t56" style="left:56.80px;top:362.40px;font-size:12px;line-height:18px;color:#1a1a1a;font-family:'Liberation Mono','Noto Serif CJK SC',monospace;letter-spacing:-0.702px;">拉伸 2</span>
<span class="t" id="t57" style="left:56.80px;top:380.60px;font-size:12px;line-height:18px;color:#1a1a1a;font-family:'Liberation Mono','Noto Serif CJK SC',monospace;letter-spacing:-0.702px;">倒角 1</span>
<span class="t" id="t58" style="left:56.80px;top:398.70px;font-size:12px;line-height:18px;color:#1a1a1a;font-family:'Liberation Mono','Noto Serif CJK SC',monospace;letter-spacing:-0.702px;">倒角 2</span>
<span class="t" id="t59" style="left:56.80px;top:416.70px;font-size:12px;line-height:18px;color:#1a1a1a;font-family:'Liberation Mono','Noto Serif CJK SC',monospace;letter-spacing:-0.154px;">在此插入</span>
<svg class="a" style="left:16.5px;top:253.5px;" width="15" height="15" viewBox="0 0 15 15"><path d="M1 4.500l3-3.500h10v9.500l-3 3.500H1z" fill="#9fdcf4" stroke="#2a86b8" stroke-width="1"/><path d="M1 4.500h10v9.500M11 4.500l3-3.500" fill="none" stroke="#2a86b8" stroke-width="1"/><rect x="1.500" y="5" width="9" height="8.500" fill="#c8ecfa"/></svg>
<svg class="a" style="left:36px;top:274.2px;" width="16" height="10" viewBox="0 0 16 10"><path d="M3.500 0.800h11.500l-3.500 8.400H0.800z" fill="#f0eae2" stroke="#5f4d3c" stroke-width="1.100"/></svg>
<svg class="a" style="left:36px;top:292.2px;" width="16" height="10" viewBox="0 0 16 10"><path d="M3.500 0.800h11.500l-3.500 8.400H0.800z" fill="#f0eae2" stroke="#5f4d3c" stroke-width="1.100"/></svg>
<svg class="a" style="left:36px;top:310.0px;" width="16" height="10" viewBox="0 0 16 10"><path d="M3.500 0.800h11.500l-3.500 8.400H0.800z" fill="#f0eae2" stroke="#5f4d3c" stroke-width="1.100"/></svg>
<svg class="a" style="left:35px;top:325px;" width="20" height="16" viewBox="0 0 20 16"><path d="M9 1v14M3 4l12 8.500M15 4L3 12.500" stroke="#8a5a2a" stroke-width="1.200"/><text x="0" y="6" font-size="6.500" font-weight="bold" fill="#222">y</text><text x="0" y="15.500" font-size="6.500" font-weight="bold" fill="#222">z</text><text x="15.500" y="10.500" font-size="6.500" font-weight="bold" fill="#222">x</text></svg>
<svg class="a" style="left:22.5px;top:347.2px;" width="7" height="9" viewBox="0 0 7 9"><path d="M0.500 0.500l6 4-6 4z" fill="#8a8a8a"/></svg>
<svg class="a" style="left:36px;top:342.7px;" width="17" height="17" viewBox="0 0 17 17"><path d="M1 6l5-5h10v9l-5 6H1z" fill="#8fd0ee" stroke="#8fb8cc" stroke-width=".7"/><path d="M6 1h10v9z" fill="#4aa0cc" opacity=".55"/><rect x="1" y="6.500" width="9.500" height="9.500" fill="#fdfdfd" stroke="#a8b4bc" stroke-width=".7"/><path d="M10.500 6.500l5-5.500" stroke="#8fb8cc" stroke-width=".7"/></svg>
<svg class="a" style="left:22.5px;top:365.3px;" width="7" height="9" viewBox="0 0 7 9"><path d="M0.500 0.500l6 4-6 4z" fill="#8a8a8a"/></svg>
<svg class="a" style="left:36px;top:360.8px;" width="17" height="17" viewBox="0 0 17 17"><path d="M1 6l5-5h10v9l-5 6H1z" fill="#8fd0ee" stroke="#8fb8cc" stroke-width=".7"/><path d="M6 1h10v9z" fill="#4aa0cc" opacity=".55"/><rect x="1" y="6.500" width="9.500" height="9.500" fill="#fdfdfd" stroke="#a8b4bc" stroke-width=".7"/><path d="M10.500 6.500l5-5.500" stroke="#8fb8cc" stroke-width=".7"/></svg>
<svg class="a" style="left:36px;top:379.0px;" width="17" height="17" viewBox="0 0 17 17"><path d="M7.500 1l6 5.500-5 5.500-6-5.500z" fill="#bfe8f8" stroke="#4a9ac0" stroke-width="1"/><path d="M13.500 6.500v4l-5 5.500v-4z" fill="#8cc8e4" stroke="#4a9ac0" stroke-width=".6"/><path d="M0.500 3.500l2 3" stroke="#c8c8c8"/></svg>
<svg class="a" style="left:36px;top:397.1px;" width="17" height="17" viewBox="0 0 17 17"><path d="M7.500 1l6 5.500-5 5.500-6-5.500z" fill="#bfe8f8" stroke="#4a9ac0" stroke-width="1"/><path d="M13.500 6.500v4l-5 5.500v-4z" fill="#8cc8e4" stroke="#4a9ac0" stroke-width=".6"/><path d="M0.500 3.500l2 3" stroke="#c8c8c8"/></svg>
<svg class="a" style="left:38.5px;top:417.5px;" width="12" height="12" viewBox="0 0 12 12"><path d="M0.500 4h5V0.500l6 5.500-6 5.500V8h-5z" fill="#1c8a1c" stroke="#0c5a0c" stroke-width=".8"/></svg>
<div class="a" style="left:108.6px;top:374.8px;width:117px;height:21.6px;background:#fff;border:1px solid #cfcfcf;"></div>
<div class="a" style="left:212px;top:375.8px;width:1px;height:21.6px;background:#d8d8d8;"></div>
<svg class="a" style="left:216.3px;top:385.0px;" width="7" height="4" viewBox="0 0 7 4"><path d="M0 0h7l-3.5 4z" fill="#9a9a9a"/></svg>
<div class="a" style="left:13.5px;top:650px;width:93.5px;height:14.399999999999977px;background:#dedede;"></div>
<div class="a" style="left:13.5px;top:650px;width:12px;height:12.399999999999977px;background:#f1f1f1;border:1px solid #dcdcdc;"></div>
<div class="a" style="left:93px;top:650px;width:12px;height:12.399999999999977px;background:#f1f1f1;border:1px solid #dcdcdc;"></div>
<div class="a" style="left:28.3px;top:650px;width:54.3px;height:12.399999999999977px;background:#f4f4f4;border:1px solid #cdcdcd;"></div>
<svg class="a" style="left:18.0px;top:653.2px;" width="5" height="8" viewBox="0 0 5 8"><path d="M5 0v8L0 4z" fill="#8e8e8e"/></svg>
<svg class="a" style="left:97.5px;top:653.2px;" width="5" height="8" viewBox="0 0 5 8"><path d="M0 0v8l5-4z" fill="#8e8e8e"/></svg>
<div class="a" style="left:107.8px;top:650px;width:150.5px;height:14.399999999999977px;background:#dedede;"></div>
<div class="a" style="left:107.8px;top:650px;width:12px;height:12.399999999999977px;background:#f1f1f1;border:1px solid #dcdcdc;"></div>
<div class="a" style="left:244.3px;top:650px;width:12px;height:12.399999999999977px;background:#f1f1f1;border:1px solid #dcdcdc;"></div>
<div class="a" style="left:123px;top:650px;width:51.80000000000001px;height:12.399999999999977px;background:#f4f4f4;border:1px solid #cdcdcd;"></div>
<svg class="a" style="left:112.3px;top:653.2px;" width="5" height="8" viewBox="0 0 5 8"><path d="M5 0v8L0 4z" fill="#8e8e8e"/></svg>
<svg class="a" style="left:248.8px;top:653.2px;" width="5" height="8" viewBox="0 0 5 8"><path d="M0 0v8l5-4z" fill="#8e8e8e"/></svg>
<div class="a" style="left:4px;top:670.8px;width:1358px;height:2px;background:#48484c;"></div>
<div class="a" style="left:273.7px;top:210.3px;width:32.3px;height:425px;background:#dcdcdc;"></div>
<svg class="a" style="left:279.5px;top:215.5px;" width="20" height="20" viewBox="0 0 20 20"><rect x="1.500" y="2" width="14" height="12" fill="#fbfbfb" stroke="#8a9aa6"/><circle cx="8.500" cy="8" r="4.200" fill="#eef6fa" stroke="#6f8796" stroke-width="1.300"/><path d="M11.500 11l5.500 6" stroke="#8d9aa2" stroke-width="2.200"/></svg>
<svg class="a" style="left:279.5px;top:240.5px;" width="20" height="20" viewBox="0 0 20 20"><circle cx="8" cy="7.500" r="5.200" fill="#e8f6fc" stroke="#5f94ad" stroke-width="1.600"/><path d="M5 7.500h6M8 4.500v6" stroke="#1f4f78" stroke-width="1.900"/><path d="M11.800 11.500l5.500 6.500" stroke="#98a4aa" stroke-width="2.500"/></svg>
<svg class="a" style="left:279.5px;top:266.5px;" width="20" height="20" viewBox="0 0 20 20"><circle cx="8" cy="7.500" r="5.200" fill="#e8f6fc" stroke="#5f94ad" stroke-width="1.600"/><path d="M5 7.500h6" stroke="#1f4f78" stroke-width="1.900"/><path d="M11.800 11.500l5.500 6.500" stroke="#98a4aa" stroke-width="2.500"/></svg>
<svg class="a" style="left:279.5px;top:293.0px;" width="20" height="20" viewBox="0 0 20 20"><defs><linearGradient id="grp" x1="0" y1="0" x2="1" y2="1"><stop offset="0" stop-color="#f4fafd"/><stop offset="1" stop-color="#6db4d2"/></linearGradient></defs><rect x="2" y="3" width="16" height="14" fill="url(#grp)" stroke="#8fb3c4" stroke-width=".8"/><path d="M3 17L15 5" stroke="#1f4f70" stroke-width="1.300"/><path d="M2.500 17.500l3.500-1-2.500-2.500z" fill="#1f3f58"/></svg>
<svg class="a" style="left:279.5px;top:319.0px;" width="20" height="20" viewBox="0 0 20 20"><defs><radialGradient id="gsp" cx=".35" cy=".3" r=".8"><stop offset="0" stop-color="#fff"/><stop offset="1" stop-color="#a8a8a8"/></radialGradient></defs><circle cx="12.500" cy="7" r="5" fill="url(#gsp)"/><circle cx="7" cy="12" r="5.500" fill="url(#gsp)"/><path d="M19.500 16v3.500H16z" fill="#555"/></svg>
<svg class="a" style="left:279.5px;top:346.0px;" width="20" height="20" viewBox="0 0 20 20"><path d="M2 6.500l4-4.500h12v11l-4 4.500H2z" fill="#8fd4ee" stroke="#1f5f80" stroke-width="1.200"/><rect x="2" y="6.500" width="12" height="11" fill="#fcfeff" stroke="#1f5f80" stroke-width="1.200"/><path d="M14 6.500l4-4.500" stroke="#1f5f80" stroke-width="1.200"/><path d="M19.500 16v3.500H16z" fill="#555"/></svg>
<svg class="a" style="left:279.5px;top:372.5px;" width="20" height="20" viewBox="0 0 20 20"><rect x="2" y="2" width="13" height="13" fill="#cfeaf6" stroke="#9ac4d8" stroke-width=".8"/><rect x="2" y="2" width="13" height="4" fill="#a8d8ee"/><rect x="10" y="9" width="8" height="9.500" fill="#fafafa" stroke="#777" stroke-width=".9"/><path d="M11.500 11.500h5M11.500 13.800h5M11.500 16h5" stroke="#555" stroke-width=".9"/><path d="M19.500 16v3.500H16z" fill="#555"/></svg>
<svg class="a" style="left:279.5px;top:399.5px;" width="20" height="20" viewBox="0 0 20 20"><rect x="2" y="1.500" width="12" height="10" fill="#fbfbfb" stroke="#8a8a8a" stroke-width=".9"/><path d="M2 4.800h12M2 8.100h12M6 1.500v10" stroke="#8a8a8a" stroke-width=".9"/><rect x="7" y="10.500" width="11.500" height="8" rx="1" fill="#333"/><rect x="10.500" y="9" width="4" height="2" fill="#333"/><circle cx="12.800" cy="14.500" r="2.300" fill="#d8d8d8"/></svg>
<svg class="a" style="left:279.5px;top:425.6px;" width="20" height="20" viewBox="0 0 20 20"><path d="M3 8l3-3h9v9l-3 3H3z" fill="#bfe4f4" stroke="#8fc0d8" stroke-width=".8"/><rect x="3" y="8" width="9" height="9" fill="#f8fdff" stroke="#8fc0d8" stroke-width=".8"/><path d="M8.500 0.500v4M6.800 3l1.700 2 1.700-2M19.500 9.500h-4M17 7.800l-2 1.700 2 1.700" stroke="#1c1c1c" stroke-width="1.200" fill="none"/></svg>
<svg class="a" style="left:279.5px;top:453.6px;" width="20" height="20" viewBox="0 0 20 20"><path d="M2.500 2l3 3M5.500 2l-3 3" stroke="#8a6a2a" stroke-width="1.300"/><path d="M10 1l-1.500 3.500M7.500 7l-2 4.500" stroke="#6a4a1a" stroke-width="1.500"/><path d="M12.500 6v11M7.500 8.500l10 6M17.500 8.500l-10 6" stroke="#8a6a2a" stroke-width="1.200"/><path d="M19.500 16v3.500H16z" fill="#555"/></svg>
<svg class="a" style="left:279.5px;top:481.0px;" width="20" height="20" viewBox="0 0 20 20"><path d="M5.500 3h12l-4 8h-12z" fill="#f6f2ea" stroke="#5a4a3a" stroke-width="1.200"/><path d="M10 14.5c2-2.800 6-2.800 8 0c-2 2.800-6 2.800-8 0z" fill="#fff" stroke="#1c1c1c" stroke-width="1.100"/><circle cx="14" cy="14.5" r="1.600" fill="#1c1c1c"/></svg>
<svg class="a" style="left:279.5px;top:506.6px;" width="20" height="20" viewBox="0 0 20 20"><path d="M10 1l-2 5M7 9l-3 7" stroke="#6a4a1a" stroke-width="1.500"/><path d="M10 14.5c2-2.800 6-2.800 8 0c-2 2.800-6 2.800-8 0z" fill="#fff" stroke="#1c1c1c" stroke-width="1.100"/><circle cx="14" cy="14.5" r="1.600" fill="#1c1c1c"/></svg>
<svg class="a" style="left:279.5px;top:532.0px;" width="20" height="20" viewBox="0 0 20 20"><path d="M3 2l3.500 3.500M6.500 2L3 5.500M11.500 4l3.500 3.500M15 4l-3.500 3.500M2 9.500l3.500 3.500M5.500 9.500L2 13" stroke="#8a6a2a" stroke-width="1.400"/><path d="M10 14.5c2-2.800 6-2.800 8 0c-2 2.800-6 2.800-8 0z" fill="#fff" stroke="#1c1c1c" stroke-width="1.100"/><circle cx="14" cy="14.5" r="1.600" fill="#1c1c1c"/></svg>
<svg class="a" style="left:279.5px;top:558.0px;" width="20" height="20" viewBox="0 0 20 20"><path d="M9 1.500v15M3 5l12 8M15 5L3 13" stroke="#8a6a2a" stroke-width="1.200"/><text x="1" y="7" font-size="7" font-weight="bold" fill="#1c1c1c">y</text><text x="1" y="16" font-size="7" font-weight="bold" fill="#1c1c1c">z</text><text x="15" y="9" font-size="7" font-weight="bold" fill="#1c1c1c">x</text><path d="M10.5 14.5c2-2.800 6-2.800 8 0c-2 2.800-6 2.800-8 0z" fill="#fff" stroke="#1c1c1c" stroke-width="1.100"/><circle cx="14.5" cy="14.5" r="1.600" fill="#1c1c1c"/></svg>
<svg class="a" style="left:279.5px;top:584.5px;" width="20" height="20" viewBox="0 0 20 20"><rect x="2" y="2.500" width="10" height="6" fill="#fbfbfb" stroke="#7a6a4a" stroke-width="1"/><path d="M13 5.500h4.500v3M15.500 7l2 2.500 2-2.500" stroke="#1c1c1c" fill="none" stroke-width="1.100"/><path d="M10 15.5c2-2.800 6-2.800 8 0c-2 2.800-6 2.800-8 0z" fill="#fff" stroke="#1c1c1c" stroke-width="1.100"/><circle cx="14" cy="15.5" r="1.600" fill="#1c1c1c"/></svg>
<svg class="a" style="left:279.5px;top:611.0px;" width="20" height="20" viewBox="0 0 20 20"><path d="M5 3.500l4.500 7 7.500-2.500M9.500 10.500L5 17" stroke="#3a3a3a" stroke-width="1.300" fill="none"/><circle cx="5" cy="3.500" r="2.500" fill="#4aa85a"/><circle cx="17" cy="8" r="2.500" fill="#e06a78"/><circle cx="5" cy="17" r="2.500" fill="#4a8ab8"/></svg>
<div class="a" style="left:4px;top:672.8px;width:1358px;height:61px;background:#dfdfdf;"></div>
<div class="a" style="left:1154.6px;top:672.8px;width:207.4px;height:61px;background:#e6e6e6;"></div>
<div class="a" style="left:10.5px;top:708.4px;width:19.4px;height:18.8px;background:#d0d0d0;border:1px solid #8f8f8f;"></div>
<svg class="a" style="left:15px;top:711px;" width="13" height="16" viewBox="0 0 13 16"><g fill="#fff" stroke="#333" stroke-width=".9"><rect x="3.500" y="0.500" width="3" height="3"/><rect x="3.500" y="6.500" width="3" height="3"/><rect x="3.500" y="12.500" width="3" height="3"/><rect x="9.500" y="6.500" width="3" height="3"/></g><path d="M5 3.500v3M5 9.500v3M6.500 8h3" stroke="#333"/></svg>
<svg class="a" style="left:39px;top:709.5px;" width="18" height="19" viewBox="0 0 18 19"><defs><radialGradient id="ggl" cx=".4" cy=".35" r=".7"><stop offset="0" stop-color="#9fd4f4"/><stop offset="1" stop-color="#1f6fc0"/></radialGradient></defs><circle cx="8.500" cy="10" r="7" fill="url(#ggl)"/><path d="M3 11c2-2 3-4 6-3s3-3 5-3" stroke="#d8f0ff" fill="none" stroke-width="1.400"/><ellipse cx="8.500" cy="10" rx="9.200" ry="4.200" transform="rotate(-38 8.500 10)" fill="none" stroke="#2a4a78" stroke-width="1.100"/></svg>
<svg class="a" style="left:64.5px;top:710px;" width="17" height="17" viewBox="0 0 17 17"><defs><linearGradient id="gsq" x1="0" y1="0" x2="1" y2="1"><stop offset="0" stop-color="#ffffff"/><stop offset="1" stop-color="#b4d4e8"/></linearGradient></defs><rect x="1.300" y="1.800" width="14.800" height="14.400" fill="url(#gsq)" stroke="#3f6f8c" stroke-width="1"/></svg>
<div class="a" style="left:93px;top:707.5px;width:1px;height:22px;background:#9a9a9a;"></div>
<svg class="a" style="left:99.5px;top:685.3px;" width="5" height="5" viewBox="0 0 5 5"><circle cx="2.500" cy="2.500" r="2.300" fill="#1f5f80"/></svg>
<span class="t" id="t60" style="left:110.00px;top:680.70px;font-size:11px;line-height:17px;color:#3c3c3c;letter-spacing:0.468px;">已成功删除 "D:\ptc\CreoWork3.0\work\chenxl.xlsx"。</span>
<svg class="a" style="left:96.6px;top:698px;" width="11.5" height="11.5" viewBox="0 0 11.5 11.5"><path d="M0.800 3.800h5V0.800l5 5-5 5V7.800h-5z" fill="#4aa8d8" stroke="#1a5a84" stroke-width="1.200"/></svg>
<span class="t" id="t61" style="left:109.50px;top:696.70px;font-size:11px;line-height:17px;color:#3c3c3c;letter-spacing:0.031px;">选择当前Excel工作簿中单元格的范围</span>
<svg class="a" style="left:99.5px;top:717.5px;" width="5" height="5" viewBox="0 0 5 5"><circle cx="2.500" cy="2.500" r="2.300" fill="#1f5f80"/></svg>
<span class="t" id="t62" style="left:110.00px;top:712.90px;font-size:11px;line-height:17px;color:#3c3c3c;letter-spacing:-0.151px;">Excel 分析成功完成。</span>
<div class="a" style="left:980.9px;top:698px;width:1px;height:32px;background:#a6a6a6;"></div>
<div class="a" style="left:1021.9px;top:698px;width:1px;height:32px;background:#a6a6a6;"></div>
<div class="a" style="left:1068.9px;top:698px;width:1px;height:32px;background:#a6a6a6;"></div>
<div class="a" style="left:1026px;top:703.4px;width:38.4px;height:19.4px;background:#f4f4f4;border:1px solid #cfcfcf;"></div>
<div class="a" style="left:1052.7px;top:704.4px;width:1px;height:19.4px;background:#d4d4d4;"></div>
<svg class="a" style="left:1030px;top:705.5px;" width="19" height="17" viewBox="0 0 19 17"><path d="M3.500 3h4v3h4V3h4l2.500 8.500v4h-6.500v-4h-4v4H1v-4z" fill="#3a3a3a"/><rect x="1.500" y="11" width="5.500" height="4.500" fill="#7a7a7a"/><rect x="12" y="11" width="5.500" height="4.500" fill="#7a7a7a"/><rect x="4" y="1.500" width="3" height="2.500" fill="#555"/><rect x="12" y="1.500" width="3" height="2.500" fill="#555"/></svg>
<svg class="a" style="left:1056.1px;top:712.5px;" width="7" height="4" viewBox="0 0 7 4"><path d="M0 0h7l-3.5 4z" fill="#555"/></svg>
<div class="a" style="left:1167px;top:703.4px;width:174.4px;height:21.5px;background:#f4f4f4;border:1px solid #cfcfcf;"></div>
<div class="a" style="left:1328px;top:704.4px;width:1px;height:21.5px;background:#dadada;"></div>
<span class="t" id="t63" style="left:1176.30px;top:707.30px;font-size:12px;line-height:18px;color:#555;letter-spacing:-0.508px;">几何</span>
<svg class="a" style="left:1332.1px;top:713.5px;" width="7" height="4" viewBox="0 0 7 4"><path d="M0 0h7l-3.5 4z" fill="#8a8a8a"/></svg>
<svg class="a" style="left:1154px;top:672px;overflow:hidden;" width="66" height="61" viewBox="0 0 66 61"><ellipse cx="23.500" cy="24.300" rx="25" ry="15.500" transform="rotate(42 23.500 24.300)" fill="none" stroke="#8fa4b8" stroke-width="4.200" opacity=".55"/><ellipse cx="43.500" cy="40" rx="23" ry="12.500" transform="rotate(-62 43.500 40)" fill="none" stroke="#e07070" stroke-width="4.200" opacity=".5"/></svg>
<span class="t" id="t64" style="left:1225.35px;top:675.00px;font-size:27px;line-height:33px;color:rgba(112,192,150,.85);font-family:'Liberation Serif','Noto Serif CJK SC',serif;font-weight:900;letter-spacing:2.125px;">野火论坛</span>
<span class="t" id="t65" style="left:1213.20px;top:708.30px;font-size:17px;line-height:23px;color:rgba(150,196,208,.5);letter-spacing:-0.349px;">www.proewildfire.cn</span>
<div class="a" style="left:0px;top:733.7px;width:1366px;height:5px;background:#ababab;"></div>
<div class="a" style="left:1362px;top:0px;width:4px;height:738px;background:#ababab;"></div>
<svg class="a" style="left:12px;top:732px;overflow:hidden;" width="30" height="6" viewBox="0 0 30 6"><circle cx="15" cy="17" r="14.500" fill="#e8f0f8" stroke="#6a7a98" stroke-width="1.400"/></svg>
<svg class="a" style="left:16.4px;top:10px;" width="16" height="16" viewBox="0 0 16 16"><rect x="0" y="0" width="15.500" height="15.500" fill="#fdfdfd"/><rect x="2.200" y="2.200" width="11.200" height="11.200" fill="#2a2a2a"/><rect x="5.500" y="2.200" width="7.900" height="7.600" fill="#1a9ad8"/><path d="M3.700 2.500v9.400h9.500" stroke="#fdfdfd" stroke-width="1.600" fill="none"/></svg>
<div class="a" style="left:44.2px;top:6px;width:1px;height:24px;background:#8a8a8a;"></div>
<svg class="a" style="left:52px;top:9.5px;" width="16" height="18" viewBox="0 0 16 18"><defs><linearGradient id="gdoc" x1="0" y1="0" x2="1" y2="1"><stop offset="0" stop-color="#ffffff"/><stop offset="1" stop-color="#c9ccd2"/></linearGradient></defs><path d="M0.500 0.500h9.500l4.500 4.500v12H0.500z" fill="url(#gdoc)" stroke="#9a9a9a" stroke-width=".8"/><path d="M10 0.500v4.500h4.500z" fill="#e4e4e4" stroke="#9a9a9a" stroke-width=".6"/></svg>
<svg class="a" style="left:74px;top:8.5px;" width="19" height="18" viewBox="0 0 19 18"><path d="M1 5h5l1.500 1.500h7.500V16H1z" fill="#d8bc7a" stroke="#9a7a3a" stroke-width=".7"/><path d="M3.500 9h14.500l-3 7.500H0.800z" fill="#f6e4b0" stroke="#b89450" stroke-width=".7"/><path d="M11 3.500c1-2.500 5-2.500 5.500 0.500M16.800 1.500v3h-3" stroke="#b8b8b8" stroke-width="1.300" fill="none"/></svg>
<svg class="a" style="left:99px;top:9.5px;" width="18" height="18" viewBox="0 0 18 18"><rect x="0.500" y="0.500" width="16.500" height="16.500" rx="1" fill="#8c8c8c" stroke="#b0b0b0" stroke-width=".8"/><rect x="3" y="1" width="11" height="7" fill="#eef0f2"/><rect x="4.500" y="10.500" width="8.500" height="6.500" fill="#dfe4ea"/><rect x="6" y="11.500" width="3" height="4.500" fill="#6a7a8a"/></svg>
<svg class="a" style="left:122px;top:9px;" width="19" height="19" viewBox="0 0 19 19"><path d="M2 2.500c0-2 8-2 8 0v9c0 2-8 2-8 0z" fill="#e2e2e2" stroke="#a8a8a8" stroke-width=".7"/><ellipse cx="6" cy="2.500" rx="4" ry="1.400" fill="#f6f6f6" stroke="#a8a8a8" stroke-width=".6"/><path d="M6 9h5.500l1 1.200h5.500V18H6z" fill="#f3e0a8" stroke="#b89450" stroke-width=".7"/><path d="M9 13.500l2 2 4-4" stroke="#2a2a2a" stroke-width="1.500" fill="none"/></svg>
<svg class="a" style="left:148px;top:11.5px;" width="16" height="14" viewBox="0 0 16 14"><path d="M3 6.500C5 0.500 14.500 1.500 13.500 9c-0.300 2-1.500 3-3 3.500" stroke="#7c7c7c" stroke-width="2.600" fill="none"/><path d="M0.300 2.500l1.200 7.500 6.500-3.500z" fill="#7c7c7c"/></svg>
<svg class="a" style="left:170.05px;top:16.25px;" width="7.5" height="4.5" viewBox="0 0 7.5 4.5"><path d="M0 0h7.5l-3.75 4.5z" fill="#b4b4b4"/></svg>
<svg class="a" style="left:185.5px;top:11.5px;" width="16" height="14" viewBox="0 0 16 14"><g transform="translate(16,0) scale(-1,1)"><path d="M3 6.500C5 0.500 14.500 1.500 13.500 9c-0.300 2-1.500 3-3 3.500" stroke="#7c7c7c" stroke-width="2.600" fill="none"/><path d="M0.300 2.500l1.200 7.500 6.500-3.500z" fill="#7c7c7c"/></g></svg>
<svg class="a" style="left:207.65px;top:16.25px;" width="7.5" height="4.5" viewBox="0 0 7.5 4.5"><path d="M0 0h7.5l-3.75 4.5z" fill="#b4b4b4"/></svg>
<svg class="a" style="left:222px;top:9.5px;" width="17" height="18" viewBox="0 0 17 18"><g fill="#e8f2f8" stroke="#7a9ab0" stroke-width=".7"><rect x="0.500" y="1" width="4" height="3.600"/><rect x="0.500" y="6.500" width="4" height="3.600"/><rect x="0.500" y="12" width="4" height="3.600"/></g><g fill="#c4c8cc"><rect x="6" y="7" width="10" height="3"/><rect x="6" y="12.500" width="10" height="3"/></g><path d="M8 4.500l4-4 4.500 3-4 4z" fill="#4aa0d0" stroke="#bfe0f0" stroke-width=".8"/></svg>
<svg class="a" style="left:245.5px;top:9px;" width="19" height="19" viewBox="0 0 19 19"><path d="M1 0.500h8.500l4 4V17H1z" fill="#f4f4f4" stroke="#b0b0b0" stroke-width=".7"/><path d="M9.500 0.500v4h4" fill="#dcdcdc" stroke="#b0b0b0" stroke-width=".6"/><path d="M3 5h5M3 8h8M3 11h6" stroke="#d4d4d4"/><path d="M17.500 5.500L9.500 16l-2.500 1.500 0.500-3 8-10z" fill="#c84848" stroke="#f0d0d0" stroke-width=".6"/></svg>
<svg class="a" style="left:270px;top:9px;" width="19" height="19" viewBox="0 0 19 19"><rect x="5" y="0.500" width="12" height="9" fill="#8a8e94" stroke="#a8acb2" stroke-width=".6"/><rect x="1.500" y="3.500" width="13" height="9.500" fill="#d8dce0" stroke="#8a8e94" stroke-width=".7"/><rect x="3" y="5" width="10" height="6.500" fill="#3aa8e8"/><rect x="6.500" y="13" width="3" height="2" fill="#9a9a9a"/><rect x="0.500" y="15" width="17.500" height="2.600" fill="#58c838"/></svg>
<svg class="a" style="left:294px;top:9.5px;" width="18" height="18" viewBox="0 0 18 18"><rect x="0.500" y="0.500" width="15.500" height="15.500" fill="#dfe2e4" stroke="#a4a8ac" stroke-width=".7"/><path d="M0.500 8h15.500M7 0.500V16" stroke="#a4a8ac" stroke-width=".7"/><rect x="6" y="6.500" width="10.500" height="7.500" fill="#8fd0f0" stroke="#e8f4fa" stroke-width="1"/></svg>
<svg class="a" style="left:317.55px;top:16.25px;" width="7.5" height="4.5" viewBox="0 0 7.5 4.5"><path d="M0 0h7.5l-3.75 4.5z" fill="#5e5e5e"/></svg>
<svg class="a" style="left:334.5px;top:12.5px;" width="14" height="12" viewBox="0 0 14 12"><rect x="0" y="0" width="13.500" height="11.500" rx="1.500" fill="#8a8a8a"/><path d="M3 2.500l7.500 6.500M10.500 2.500L3 9" stroke="#1e1e1e" stroke-width="4" stroke-linecap="round"/><path d="M3 2.500l7.500 6.500M10.500 2.500L3 9" stroke="#fdfdfd" stroke-width="2.200" stroke-linecap="round"/></svg>
<div class="a" style="left:353px;top:6px;width:1px;height:25px;background:#8a8a8a;"></div>
<svg class="a" style="left:360.5px;top:15.5px;" width="10" height="8" viewBox="0 0 10 8"><path d="M0 1h10" stroke="#c8c8c8" stroke-width="1.300"/><path d="M1 3.300h8l-4 4z" fill="none" stroke="#c8c8c8" stroke-width="1.100"/></svg>
<svg class="a" style="left:1258px;top:37px;" width="16" height="10" viewBox="0 0 16 10"><path d="M1 9l7-6.500 7 6.500h-3.800L8 6 4.800 9z" fill="#8e8e8e" stroke="#b4b4b4" stroke-width=".6"/></svg>
<svg class="a" style="left:1279px;top:36.5px;" width="18" height="18" viewBox="0 0 18 18"><circle cx="10.700" cy="7" r="5.600" fill="#3a3a3a" stroke="#e4e4e4" stroke-width="1.500"/><circle cx="10.700" cy="7" r="3.700" fill="#d8d8d8"/><path d="M6.800 10.800L2.200 15.600" stroke="#e4e4e4" stroke-width="3.800" stroke-linecap="round"/><path d="M6.800 10.800L2.200 15.600" stroke="#4a4a4a" stroke-width="1.400" stroke-linecap="round"/></svg>
<svg class="a" style="left:1302.5px;top:35.5px;" width="19" height="19" viewBox="0 0 19 19"><circle cx="9.500" cy="9.500" r="8.500" fill="#3c3c3c" stroke="#c4c4c4" stroke-width="1.300"/><path d="M9.500 5l6 2.800-6 2.800-6-2.800z" fill="#f4f4f4"/><path d="M5.800 9.500v3c2 1.600 5.400 1.600 7.400 0v-3l-3.700 1.800z" fill="#f4f4f4"/></svg>
<svg class="a" style="left:1327.25px;top:42.5px;" width="6.5" height="4" viewBox="0 0 6.5 4"><path d="M0 0h6.5l-3.25 4z" fill="#5a5a5a"/></svg>
<svg class="a" style="left:1340.5px;top:35.5px;" width="19" height="19" viewBox="0 0 19 19"><circle cx="9.500" cy="9.500" r="8.500" fill="#3c3c3c" stroke="#c4c4c4" stroke-width="1.300"/><text x="9.500" y="14.500" text-anchor="middle" font-size="14" font-weight="bold" fill="#fafafa">?</text></svg>
<svg class="a" style="left:0;top:0" width="1366" height="738" viewBox="0 0 1366 738"><defs>
<linearGradient id="gSide" gradientUnits="userSpaceOnUse" x1="545" y1="262" x2="575" y2="514">
<stop offset="0" stop-color="#8f999e"/><stop offset=".25" stop-color="#838d92"/><stop offset=".5" stop-color="#70797e"/><stop offset=".75" stop-color="#565d61"/><stop offset="1" stop-color="#474d51"/></linearGradient>
<linearGradient id="gSideL" gradientUnits="userSpaceOnUse" x1="560" y1="390" x2="640" y2="380">
<stop offset="0" stop-color="#ffffff" stop-opacity=".10"/><stop offset=".5" stop-color="#ffffff" stop-opacity="0"/><stop offset="1" stop-color="#000000" stop-opacity=".08"/></linearGradient>
<linearGradient id="gCh" gradientUnits="userSpaceOnUse" x1="520" y1="268" x2="550" y2="520">
<stop offset="0" stop-color="#a1acb2"/><stop offset=".14" stop-color="#b4bfc5"/><stop offset=".30" stop-color="#dbe5ea"/><stop offset=".40" stop-color="#d3dde2"/><stop offset=".55" stop-color="#a9b4b9"/><stop offset=".75" stop-color="#838d92"/><stop offset="1" stop-color="#666f74"/></linearGradient>
<linearGradient id="gFace" gradientUnits="userSpaceOnUse" x1="450" y1="300" x2="520" y2="495">
<stop offset="0" stop-color="#a3aeb4"/><stop offset=".5" stop-color="#98a3a9"/><stop offset="1" stop-color="#8d989e"/></linearGradient>
<linearGradient id="gHc" gradientUnits="userSpaceOnUse" x1="478" y1="337" x2="470" y2="456">
<stop offset="0" stop-color="#717a80"/><stop offset=".3" stop-color="#8a949a"/><stop offset=".62" stop-color="#c5cfd4"/><stop offset=".8" stop-color="#e1eaee"/><stop offset="1" stop-color="#b9c3c8"/></linearGradient>
<linearGradient id="gHole" gradientUnits="userSpaceOnUse" x1="487" y1="346" x2="498" y2="446">
<stop offset="0" stop-color="#3f4549"/><stop offset=".25" stop-color="#5b6266"/><stop offset=".6" stop-color="#7d868b"/><stop offset="1" stop-color="#939da2"/></linearGradient>
<clipPath id="cE3"><ellipse cx="483.9" cy="396.6" rx="31.6" ry="60.0" transform="rotate(-6.8 483.9 396.6)" /></clipPath>
</defs>
<ellipse cx="611.3" cy="381.4" rx="52.0" ry="100.0" transform="rotate(-6.8 611.3 381.4)" fill="#596167" stroke="#0c0c0c" stroke-width="1"/>
<path d="M441.5 375.6L441.5 371.3L441.6 367.1L441.7 362.9L442.0 358.7L442.3 354.6L442.7 350.5L443.2 346.5L443.8 342.5L444.4 338.6L445.1 334.7L445.9 331.0L446.8 327.3L447.7 323.7L448.7 320.1L449.8 316.7L451.0 313.4L452.2 310.1L453.5 307.0L454.8 304.0L456.3 301.0L457.7 298.2L459.3 295.5L460.9 292.9L462.6 290.5L464.3 288.2L466.0 286.0L467.9 283.9L469.7 282.0L471.6 280.2L473.6 278.5L475.6 277.0L477.6 275.6L479.7 274.4L481.8 273.3L483.9 272.3L486.1 271.6L488.3 270.9L490.5 270.4L492.7 270.1L576.4 260.1L578.7 259.9L581.0 259.8L583.3 260.0L585.5 260.2L587.8 260.6L590.1 261.2L592.5 261.9L594.8 262.8L597.1 263.8L599.3 264.9L601.6 266.2L603.9 267.7L606.1 269.2L608.4 271.0L610.6 272.8L612.8 274.8L614.9 276.9L617.1 279.2L619.2 281.6L621.3 284.1L623.3 286.7L625.3 289.5L627.2 292.3L629.1 295.3L631.0 298.4L632.8 301.6L634.6 304.9L636.3 308.3L637.9 311.7L639.5 315.3L641.1 318.9L642.6 322.7L644.0 326.5L645.3 330.3L646.6 334.3L647.8 338.3L649.0 342.3L650.1 346.4L651.1 350.6L652.0 354.8L652.9 359.0L653.6 363.2L654.4 367.5L655.0 371.8L655.5 376.1L656.0 380.4L656.4 384.8L656.7 389.1L657.0 393.4L657.1 397.7L657.2 402.0L657.2 406.3L657.1 410.5L657.0 414.7L656.7 418.9L656.4 423.0L656.0 427.1L655.5 431.1L654.9 435.1L654.3 439.0L653.6 442.9L652.8 446.6L651.9 450.3L651.0 453.9L650.0 457.5L648.9 460.9L647.7 464.2L646.5 467.5L645.2 470.6L643.9 473.6L642.4 476.6L641.0 479.4L639.4 482.1L637.8 484.7L636.1 487.1L634.4 489.4L632.7 491.6L630.8 493.7L629.0 495.6L627.1 497.4L625.1 499.1L623.1 500.6L621.1 502.0L619.0 503.2L616.9 504.3L614.8 505.3L612.6 506.0L610.4 506.7L608.2 507.2L606.0 507.5L522.3 517.5L520.0 517.7L517.7 517.8L515.4 517.6L513.2 517.4L510.9 517.0L508.6 516.4L506.2 515.7L503.9 514.8L501.6 513.8L499.4 512.7L497.1 511.4L494.8 509.9L492.6 508.4L490.3 506.6L488.1 504.8L485.9 502.8L483.8 500.7L481.6 498.4L479.5 496.0L477.4 493.5L475.4 490.9L473.4 488.1L471.5 485.3L469.6 482.3L467.7 479.2L465.9 476.0L464.1 472.7L462.4 469.3L460.8 465.9L459.2 462.3L457.6 458.7L456.1 454.9L454.7 451.1L453.4 447.3L452.1 443.3L450.9 439.3L449.7 435.3L448.6 431.2L447.6 427.0L446.7 422.8L445.8 418.6L445.1 414.4L444.3 410.1L443.7 405.8L443.2 401.5L442.7 397.2L442.3 392.8L442.0 388.5L441.7 384.2L441.6 379.9Z" fill="url(#gSide)" stroke="#0c0c0c" stroke-width="1" stroke-linejoin="round"/>
<path d="M430.5 381.9L430.5 378.5L430.6 375.1L430.7 371.7L430.9 368.4L431.2 365.1L431.6 361.8L432.0 358.6L432.4 355.4L433.0 352.3L433.6 349.2L434.2 346.2L435.0 343.3L435.7 340.4L436.6 337.6L437.5 334.8L438.4 332.1L439.5 329.5L440.5 327.0L441.6 324.6L442.8 322.3L444.1 320.0L445.3 317.8L460.9 292.9L462.6 290.5L464.3 288.2L466.0 286.0L467.9 283.9L469.7 282.0L471.6 280.2L473.6 278.5L475.6 277.0L477.6 275.6L479.7 274.4L481.8 273.3L483.9 272.3L486.1 271.6L488.3 270.9L490.5 270.4L492.7 270.1L495.0 269.9L497.3 269.8L499.6 270.0L501.8 270.2L504.1 270.6L506.4 271.2L508.8 271.9L511.1 272.8L513.4 273.8L515.6 274.9L517.9 276.2L520.2 277.7L522.4 279.2L524.7 281.0L526.9 282.8L529.1 284.8L531.2 286.9L533.4 289.2L535.5 291.6L537.6 294.1L539.6 296.7L541.6 299.5L543.5 302.3L545.4 305.3L547.3 308.4L549.1 311.6L550.9 314.9L552.6 318.3L554.2 321.7L555.8 325.3L557.4 328.9L558.9 332.7L560.3 336.5L561.6 340.3L562.9 344.3L564.1 348.3L565.3 352.3L566.4 356.4L567.4 360.6L568.3 364.8L569.2 369.0L569.9 373.2L570.7 377.5L571.3 381.8L571.8 386.1L572.3 390.4L572.7 394.8L573.0 399.1L573.3 403.4L573.4 407.7L573.5 412.0L573.5 416.3L573.4 420.5L573.3 424.7L573.0 428.9L572.7 433.0L572.3 437.1L571.8 441.1L571.2 445.1L570.6 449.0L569.9 452.9L569.1 456.6L568.2 460.3L567.3 463.9L566.3 467.5L565.2 470.9L564.0 474.2L562.8 477.5L561.5 480.6L560.2 483.6L558.7 486.6L557.3 489.4L555.7 492.1L554.1 494.7L552.4 497.1L550.7 499.4L549.0 501.6L547.1 503.7L545.3 505.6L543.4 507.4L541.4 509.1L539.4 510.6L537.4 512.0L535.3 513.2L533.2 514.3L531.1 515.3L528.9 516.0L526.7 516.7L524.5 517.2L522.3 517.5L520.0 517.7L517.7 517.8L515.4 517.6L513.2 517.4L510.9 517.0L508.6 516.4L506.2 515.7L503.9 514.8L501.6 513.8L499.4 512.7L497.1 511.4L494.8 509.9L492.6 508.4L490.3 506.6L488.1 504.8L485.9 502.8L483.8 500.7L464.9 481.8L463.1 480.0L461.4 478.1L459.7 476.1L458.1 474.0L456.4 471.8L454.8 469.5L453.3 467.2L451.7 464.7L450.3 462.2L448.8 459.5L447.4 456.8L446.1 454.1L444.8 451.2L443.5 448.3L442.3 445.3L441.1 442.3L440.0 439.2L439.0 436.1L438.0 432.9L437.1 429.6L436.2 426.3L435.4 423.0L434.6 419.7L433.9 416.3L433.3 412.9L432.7 409.5L432.2 406.1L431.8 402.6L431.4 399.2L431.1 395.7L430.8 392.2L430.6 388.8L430.5 385.3Z" fill="url(#gCh)" stroke="#0c0c0c" stroke-width="1" stroke-linejoin="round"/>
<ellipse cx="484.7" cy="396.3" rx="53.3" ry="99.6" transform="rotate(-6.8 484.7 396.3)" fill="url(#gFace)" stroke="#0c0c0c" stroke-width="1"/>
<ellipse cx="483.9" cy="396.6" rx="31.6" ry="60.0" transform="rotate(-6.8 483.9 396.6)" fill="url(#gHc)" stroke="#0c0c0c" stroke-width="1"/>
<g clip-path="url(#cE3)"><ellipse cx="491.6" cy="395.9" rx="25.4" ry="50.0" transform="rotate(-6.8 491.6 395.9)" fill="url(#gHole)" stroke="#0c0c0c" stroke-width="1"/></g>
<ellipse cx="483.9" cy="396.6" rx="31.6" ry="60.0" transform="rotate(-6.8 483.9 396.6)" fill="none" stroke="#0c0c0c" stroke-width="1"/></svg>
<div class="a" style="left:833px;top:41px;width:348px;height:627px;background:#f0f0f0;"></div>
<div class="a" style="left:833px;top:41px;width:348px;height:34px;background:#e6e6e6;"></div>
<div class="a" style="left:833px;top:41px;width:1.2px;height:627px;background:#f7f7f7;"></div>
<div class="a" style="left:833px;top:41px;width:348px;height:1px;background:#f4f4f4;"></div>
<span class="t" id="t66" style="left:976.70px;top:48.90px;font-size:13px;line-height:19px;color:#a2a2a2;letter-spacing:-0.426px;">Excel 分析</span>
<svg class="a" style="left:1160px;top:53px;" width="10" height="10" viewBox="0 0 10 10"><path d="M1.200 1.200l7.600 7.600M8.800 1.200L1.200 8.800" stroke="#9a9a9a" stroke-width="2.200"/></svg>
<div class="a" style="left:835px;top:77.2px;width:344px;height:16.4px;background:#808080;"></div>
<span class="t" id="t67" style="left:835.30px;top:77.60px;font-size:12px;line-height:18px;color:#fff;">设置</span>
<div class="a" style="left:837.3px;top:103.2px;width:337.20000000000005px;height:75.2px;background:transparent;border:1px solid #d0d0d0;"></div>
<div class="a" style="left:851.3px;top:101.2px;width:32px;height:5px;background:#f0f0f0;"></div>
<span class="t" id="t68" style="left:855.30px;top:96.70px;font-size:12px;line-height:18px;color:#2a2a2a;">文件</span>
<div class="a" style="left:847px;top:117.3px;width:75px;height:22.4px;background:#f5f5f5;border:1px solid #b4b4b4;"></div>
<span class="t" id="t69" style="left:857.00px;top:121.60px;font-size:12px;line-height:18px;color:#333;letter-spacing:-0.145px;">加载文件...</span>
<div class="a" style="left:928px;top:117.3px;width:54.2px;height:22.4px;background:#f5f5f5;border:1px solid #b4b4b4;"></div>
<span class="t" id="t70" style="left:938.00px;top:121.60px;font-size:12px;line-height:18px;color:#333;letter-spacing:-0.005px;">新文件</span>
<div class="a" style="left:847px;top:146px;width:214px;height:22.6px;background:#fff;border:1px solid #d9d9d9;"></div>
<span class="t" id="t71" style="left:851.50px;top:149.50px;font-size:13px;line-height:19px;color:#ababab;letter-spacing:-0.305px;">chenxl423.xlsx</span>
<div class="a" style="left:837.3px;top:192.6px;width:337.20000000000005px;height:164.20000000000002px;background:transparent;border:1px solid #d0d0d0;"></div>
<div class="a" style="left:847px;top:205.8px;width:320.4px;height:22.4px;background:#f6f6f6;"></div>
<div class="a" style="left:847px;top:228px;width:320.4px;height:1px;background:#e2e2e2;"></div>
<div class="a" style="left:1090px;top:205.8px;width:1px;height:22.4px;background:#dedede;"></div>
<span class="t" id="t72" style="left:1097.40px;top:210.00px;font-size:12px;line-height:18px;color:#2a2a2a;letter-spacing:-0.138px;">单元格</span>
<div class="a" style="left:847px;top:229px;width:320.4px;height:76px;background:#fff;"></div>
<div class="a" style="left:847px;top:305px;width:320.4000000000001px;height:14.600000000000023px;background:#d9d9d9;"></div>
<div class="a" style="left:847px;top:305px;width:12.5px;height:12.600000000000023px;background:#f1f1f1;border:1px solid #dcdcdc;"></div>
<div class="a" style="left:1152.9px;top:305px;width:12.5px;height:12.600000000000023px;background:#f1f1f1;border:1px solid #dcdcdc;"></div>
<div class="a" style="left:861.6px;top:305px;width:263.4px;height:12.600000000000023px;background:#f2f2f2;border:1px solid #c4c4c4;"></div>
<svg class="a" style="left:851.75px;top:308.3px;" width="5" height="8" viewBox="0 0 5 8"><path d="M5 0v8L0 4z" fill="#8e8e8e"/></svg>
<svg class="a" style="left:1157.65px;top:308.3px;" width="5" height="8" viewBox="0 0 5 8"><path d="M0 0v8l5-4z" fill="#8e8e8e"/></svg>
<div class="a" style="left:847.3px;top:324.4px;width:101.10000000000002px;height:21.8px;background:#f5f5f5;border:1px solid #b4b4b4;"></div>
<span class="t" id="t73" style="left:874.85px;top:328.50px;font-size:12px;line-height:18px;color:#333;">添加尺寸</span>
<div class="a" style="left:955.4px;top:324.4px;width:101.10000000000002px;height:21.8px;background:#f5f5f5;border:1px solid #b4b4b4;"></div>
<span class="t" id="t74" style="left:982.95px;top:328.50px;font-size:12px;line-height:18px;color:#333;">添加参数</span>
<div class="a" style="left:1063.5px;top:324.4px;width:101.29999999999995px;height:21.8px;background:#f5f5f5;border:1px solid #b4b4b4;"></div>
<span class="t" id="t75" style="left:1103.15px;top:328.50px;font-size:12px;line-height:18px;color:#333;">移除</span>
<div class="a" style="left:837.3px;top:370.6px;width:337.20000000000005px;height:48.799999999999955px;background:transparent;border:1px solid #d0d0d0;"></div>
<div class="a" style="left:851px;top:368.6px;width:151.6px;height:5px;background:#f0f0f0;"></div>
<span class="t" id="t76" style="left:855.00px;top:362.10px;font-size:13px;line-height:19px;color:#2a2a2a;letter-spacing:-0.133px;">Excel 至 Creo Parametric</span>
<div class="a" style="left:847px;top:384.3px;width:102px;height:25.4px;background:#f5f5f5;border:1px solid #b4b4b4;"></div>
<svg class="a" style="left:861px;top:389.5px;" width="12" height="18" viewBox="0 0 12 18"><path d="M1 1v13l3.200-2.800 2.300 5.300 2.200-1-2.300-5.200h4.100z" fill="#fff" stroke="#222" stroke-width="1.100" stroke-linejoin="round"/></svg>
<span class="t" id="t77" style="left:880.50px;top:390.20px;font-size:12px;line-height:18px;color:#333;letter-spacing:0.097px;">输出单元格</span>
<div class="a" style="left:955px;top:385px;width:162px;height:22.4px;background:#fff;border:1px solid #d9d9d9;"></div>
<span class="t" id="t78" style="left:959.40px;top:388.90px;font-size:13px;line-height:19px;color:#b4b4b4;letter-spacing:-0.872px;">C2:C6</span>
<div class="a" style="left:835px;top:430.4px;width:344px;height:21.2px;background:#808080;"></div>
<span class="t" id="t79" style="left:835.30px;top:433.20px;font-size:12px;line-height:18px;color:#fff;">结果</span>
<div class="a" style="left:837.3px;top:454.5px;width:337.2px;height:113.5px;background:#fff;border:1px solid #d4d4d4;"></div>
<div class="a" style="left:838.3px;top:455.5px;width:325px;height:22px;background:#f6f6f6;"></div>
<div class="a" style="left:838.3px;top:477.5px;width:325px;height:1px;background:#e2e2e2;"></div>
<div class="a" style="left:976.5px;top:455.5px;width:1px;height:22px;background:#dedede;"></div>
<span class="t" id="t80" style="left:842.40px;top:459.50px;font-size:12px;line-height:18px;color:#2a2a2a;letter-spacing:-0.003px;">单元格名称</span>
<span class="t" id="t81" style="left:983.40px;top:459.50px;font-size:12px;line-height:18px;color:#2a2a2a;">值</span>
<span class="t" id="t82" style="left:842.60px;top:477.80px;font-size:13px;line-height:19px;color:#3a3a3a;letter-spacing:-1.312px;">C3</span>
<span class="t" id="t83" style="left:982.40px;top:477.80px;font-size:13px;line-height:19px;color:#3a3a3a;letter-spacing:-0.328px;">50.000000</span>
<span class="t" id="t84" style="left:842.60px;top:496.70px;font-size:13px;line-height:19px;color:#3a3a3a;letter-spacing:-1.312px;">C4</span>
<span class="t" id="t85" style="left:982.40px;top:496.70px;font-size:13px;line-height:19px;color:#3a3a3a;letter-spacing:-0.328px;">30.000000</span>
<span class="t" id="t86" style="left:842.60px;top:515.60px;font-size:13px;line-height:19px;color:#3a3a3a;letter-spacing:-1.312px;">C5</span>
<span class="t" id="t87" style="left:982.40px;top:515.60px;font-size:13px;line-height:19px;color:#3a3a3a;letter-spacing:-0.279px;">2.000000</span>
<span class="t" id="t88" style="left:842.60px;top:534.50px;font-size:13px;line-height:19px;color:#3a3a3a;letter-spacing:-1.312px;">C6</span>
<span class="t" id="t89" style="left:982.40px;top:534.50px;font-size:13px;line-height:19px;color:#3a3a3a;letter-spacing:-0.279px;">5.000000</span>
<div class="a" style="left:1162.7px;top:477.5px;width:13.8px;height:77px;background:#f5f5f5;"></div>
<div class="a" style="left:1162.7px;top:477.5px;width:11.8px;height:11.5px;background:#f8f8f8;border:1px solid #e0e0e0;"></div>
<div class="a" style="left:1162.7px;top:540px;width:11.8px;height:12px;background:#f8f8f8;border:1px solid #e0e0e0;"></div>
<div class="a" style="left:1162.7px;top:492.2px;width:13.8px;height:11.4px;background:#dbdbdb;"></div>
<svg class="a" style="left:1170.5px;top:482px;" width="5" height="5" viewBox="0 0 5 5"><path d="M0 4.500h5L2.500 0.500z" fill="#9a9a9a"/></svg>
<svg class="a" style="left:1170.5px;top:545px;" width="5" height="5" viewBox="0 0 5 5"><path d="M0 0.500h5L2.500 4.500z" fill="#9a9a9a"/></svg>
<div class="a" style="left:838.3px;top:554.6px;width:323.20000000000005px;height:13.600000000000023px;background:#d9d9d9;"></div>
<div class="a" style="left:838.3px;top:554.6px;width:12.5px;height:11.600000000000023px;background:#f1f1f1;border:1px solid #dcdcdc;"></div>
<div class="a" style="left:1147.0px;top:554.6px;width:12.5px;height:11.600000000000023px;background:#f1f1f1;border:1px solid #dcdcdc;"></div>
<div class="a" style="left:852.5px;top:554.6px;width:253.0px;height:11.600000000000023px;background:#f2f2f2;border:1px solid #c4c4c4;"></div>
<svg class="a" style="left:843.05px;top:557.4000000000001px;" width="5" height="8" viewBox="0 0 5 8"><path d="M5 0v8L0 4z" fill="#8e8e8e"/></svg>
<svg class="a" style="left:1151.75px;top:557.4000000000001px;" width="5" height="8" viewBox="0 0 5 8"><path d="M0 0v8l5-4z" fill="#8e8e8e"/></svg>
<div class="a" style="left:1107.5px;top:554.6px;width:40px;height:13.6px;background:#d0d0d0;"></div>
<svg class="a" style="left:836.5px;top:455.4px;" width="333" height="106.2" viewBox="0 0 333 106.2"><rect x="1" y="1" width="331" height="104.200" fill="none" stroke="#dc3c3c" stroke-width="2.800"/></svg>
<span class="t" id="t90" style="left:1070.75px;top:503.00px;font-size:19px;line-height:25px;color:#dc3c3c;letter-spacing:-2.078px;-webkit-text-stroke:0.5px #dc3c3c;">1</span>
<div class="a" style="left:869.2px;top:579px;width:101.6px;height:22.6px;background:#9ddcfa;border:1px solid #6cc3ec;"></div>
<span class="t" id="t91" style="left:909.00px;top:583.30px;font-size:12px;line-height:18px;color:#333;">计算</span>
<div class="a" style="left:1041.3px;top:579px;width:101.7px;height:22.6px;background:#f5f5f5;border:1px solid #b4b4b4;"></div>
<span class="t" id="t92" style="left:1081.20px;top:583.30px;font-size:12px;line-height:18px;color:#333;">信息</span>
<div class="a" style="left:835px;top:608.6px;width:344px;height:20.6px;background:#c9c9c9;"></div>
<svg class="a" style="left:844px;top:613px;" width="7" height="12" viewBox="0 0 7 12"><path d="M0.300 0.300v11.400L6.500 6z" fill="#1c1c1c"/></svg>
<span class="t" id="t93" style="left:860.00px;top:610.80px;font-size:12px;line-height:18px;color:#222;letter-spacing:-0.003px;">已保存分析</span>
<div class="a" style="left:901px;top:637.6px;width:102px;height:22px;background:#f5f5f5;border:1px solid #b4b4b4;"></div>
<span class="t" id="t94" style="left:941.00px;top:641.80px;font-size:12px;line-height:18px;color:#333;">关闭</span>
<div class="a" style="left:1008.4px;top:637.6px;width:101.6px;height:22px;background:#c6c6c6;border:1px solid #a8a8a8;"></div>
<span class="t" id="t95" style="left:1036.30px;top:641.80px;font-size:12px;line-height:18px;color:#333;">添加特征</span>
<svg class="a" style="left:1005px;top:634.8px;" width="110" height="27.8" viewBox="0 0 110 27.8"><rect x="1.200" y="1.200" width="107.400" height="25.400" fill="none" stroke="#dc3c3c" stroke-width="2.800"/></svg>
<span class="t" id="t96" style="left:1138.25px;top:641.00px;font-size:19px;line-height:25px;color:#dc3c3c;letter-spacing:-1.078px;-webkit-text-stroke:0.5px #dc3c3c;">2</span>
<div class="a" style="left:583.2px;top:174.8px;width:465.4px;height:57px;background:#efefef;"></div>
<span class="t" id="t97" style="left:588.00px;top:180.40px;font-size:12px;line-height:18px;color:#3a3a3a;">输入名称</span>
<div class="a" style="left:587.5px;top:202.4px;width:396px;height:21.8px;background:#fff;border:1px solid #c9c9c9;"></div>
<span class="t" id="t98" style="left:592.80px;top:204.80px;font-size:13px;line-height:19px;color:#3a3a3a;letter-spacing:-0.474px;">chenxl423</span>
<div class="a" style="left:648.6px;top:206.5px;width:1px;height:16.5px;background:#111;"></div>
<svg class="a" style="left:590px;top:199px;" width="77" height="28.5" viewBox="0 0 77 28.5"><rect x="1.200" y="1.200" width="74.400" height="25.800" fill="none" stroke="#dc3c3c" stroke-width="2.800"/></svg>
<span class="t" id="t99" style="left:686.25px;top:205.50px;font-size:19px;line-height:25px;color:#dc3c3c;letter-spacing:-1.078px;-webkit-text-stroke:0.5px #dc3c3c;">3</span>
<div class="a" style="left:991.3px;top:202.6px;width:21.4px;height:21.5px;background:#9ddcfa;border:1px solid #6cc3ec;"></div>
<svg class="a" style="left:996.5px;top:208.5px;" width="13" height="12" viewBox="0 0 13 12"><path d="M1 6l3.800 4L12 1.500" stroke="#0f5a0f" stroke-width="3.200" fill="none"/><path d="M1 6l3.800 4L12 1.500" stroke="#3aa83a" stroke-width="1.800" fill="none"/></svg>
<div class="a" style="left:1020px;top:202.6px;width:21.6px;height:21.5px;background:#f5f5f5;border:1px solid #b4b4b4;"></div>
<svg class="a" style="left:1027.5px;top:210.5px;" width="9" height="8" viewBox="0 0 9 8"><path d="M1 1l7 6M8 1L1 7" stroke="#1c1c1c" stroke-width="2.200"/></svg>
</div>
</body></html>
